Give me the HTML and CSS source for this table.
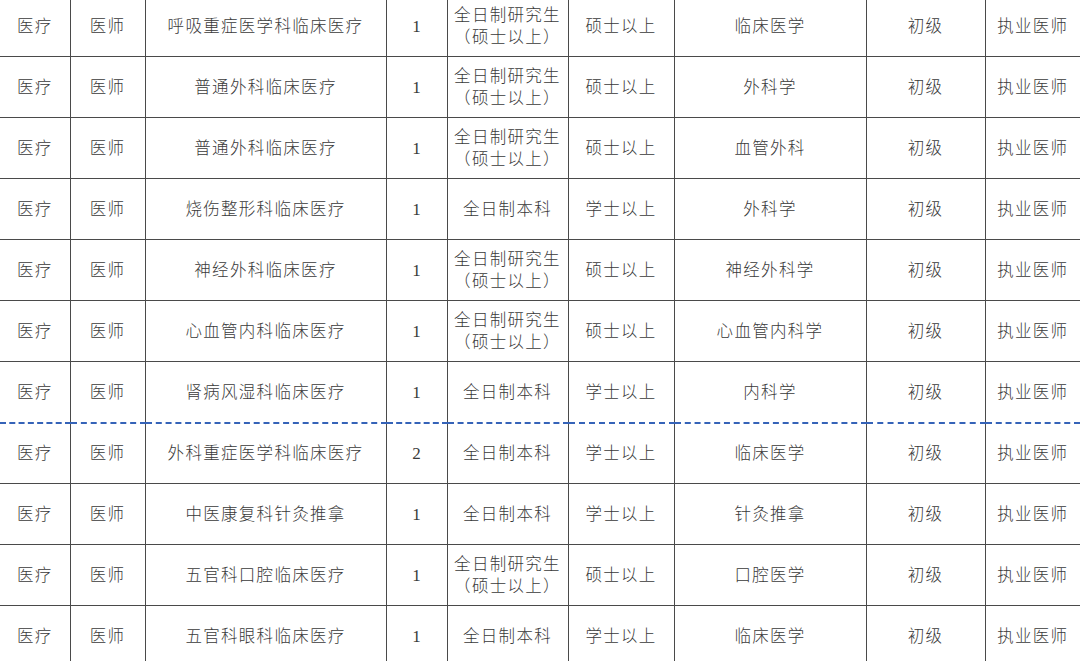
FILE: index.html
```html
<!DOCTYPE html>
<html lang="zh-CN">
<head>
<meta charset="utf-8">
<title>招聘岗位表</title>
<link rel="stylesheet" href="styles.css">
</head>
<body>
<table class="jobs">
<colgroup>
<col class="c1"><col class="c2"><col class="c3"><col class="c4"><col class="c5"><col class="c6"><col class="c7"><col class="c8"><col class="c9">
</colgroup>
<tbody>
<tr><td>医疗</td><td>医师</td><td>呼吸重症医学科临床医疗</td><td class="num">1</td><td>全日制研究生<br>（硕士以上）</td><td>硕士以上</td><td>临床医学</td><td>初级</td><td>执业医师</td></tr>
<tr><td>医疗</td><td>医师</td><td>普通外科临床医疗</td><td class="num">1</td><td>全日制研究生<br>（硕士以上）</td><td>硕士以上</td><td>外科学</td><td>初级</td><td>执业医师</td></tr>
<tr><td>医疗</td><td>医师</td><td>普通外科临床医疗</td><td class="num">1</td><td>全日制研究生<br>（硕士以上）</td><td>硕士以上</td><td>血管外科</td><td>初级</td><td>执业医师</td></tr>
<tr><td>医疗</td><td>医师</td><td>烧伤整形科临床医疗</td><td class="num">1</td><td>全日制本科</td><td>学士以上</td><td>外科学</td><td>初级</td><td>执业医师</td></tr>
<tr><td>医疗</td><td>医师</td><td>神经外科临床医疗</td><td class="num">1</td><td>全日制研究生<br>（硕士以上）</td><td>硕士以上</td><td>神经外科学</td><td>初级</td><td>执业医师</td></tr>
<tr><td>医疗</td><td>医师</td><td>心血管内科临床医疗</td><td class="num">1</td><td>全日制研究生<br>（硕士以上）</td><td>硕士以上</td><td>心血管内科学</td><td>初级</td><td>执业医师</td></tr>
<tr><td>医疗</td><td>医师</td><td>肾病风湿科临床医疗</td><td class="num">1</td><td>全日制本科</td><td>学士以上</td><td>内科学</td><td>初级</td><td>执业医师</td></tr>
<tr class="sep"><td>医疗</td><td>医师</td><td>外科重症医学科临床医疗</td><td class="num">2</td><td>全日制本科</td><td>学士以上</td><td>临床医学</td><td>初级</td><td>执业医师</td></tr>
<tr><td>医疗</td><td>医师</td><td>中医康复科针灸推拿</td><td class="num">1</td><td>全日制本科</td><td>学士以上</td><td>针灸推拿</td><td>初级</td><td>执业医师</td></tr>
<tr><td>医疗</td><td>医师</td><td>五官科口腔临床医疗</td><td class="num">1</td><td>全日制研究生<br>（硕士以上）</td><td>硕士以上</td><td>口腔医学</td><td>初级</td><td>执业医师</td></tr>
<tr><td>医疗</td><td>医师</td><td>五官科眼科临床医疗</td><td class="num">1</td><td>全日制本科</td><td>学士以上</td><td>临床医学</td><td>初级</td><td>执业医师</td></tr>
</tbody>
</table>
</body>
</html>
```
FILE: styles.css
```css
html, body {
  margin: 0;
  padding: 0;
  background: #ffffff;
  overflow: hidden;
}
.jobs {
  border-collapse: collapse;
  table-layout: fixed;
  width: 1080px;
  margin-top: -5px;
  font-family: "Liberation Serif", "Noto Sans CJK SC", serif;
  font-weight: 300;
  font-size: 16.5px;
  letter-spacing: 1.3px;
  color: #3a3a3a;
}
.c1 { width: 70px; }
.c2 { width: 75px; }
.c3 { width: 241px; }
.c4 { width: 61px; }
.c5 { width: 121px; }
.c6 { width: 106px; }
.c7 { width: 192px; }
.c8 { width: 119px; }
.c9 { width: 95px; }
.jobs td {
  height: 61px;
  padding: 2px 0 0 0;
  text-align: center;
  vertical-align: middle;
  line-height: 22px;
  border: 1px solid #4a4a4a;
  box-sizing: border-box;
  white-space: nowrap;
}
.jobs tr td:first-child { border-left: none; }
.jobs tr td:last-child { border-right: none; }
.jobs .num {
  font-size: 17px;
  letter-spacing: 0;
}
.jobs tr.sep td {
  border-top: 2px dashed #3563b8;
}
```
